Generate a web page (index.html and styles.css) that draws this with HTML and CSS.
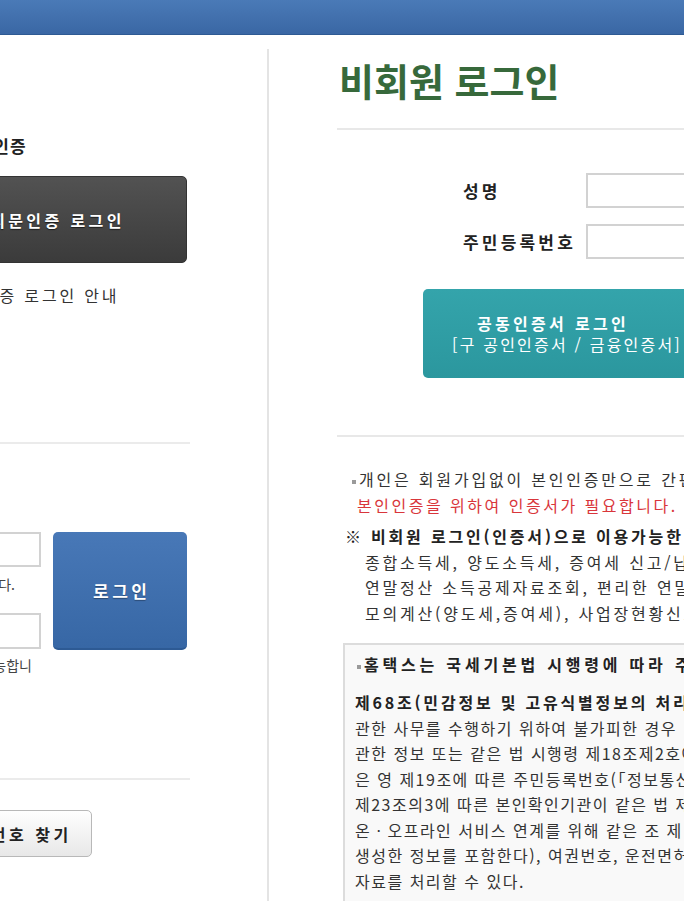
FILE: index.html
```html
<!DOCTYPE html>
<html lang="ko">
<head>
<meta charset="utf-8">
<title>비회원 로그인</title>
<link rel="stylesheet" href="styles.css">
</head>
<body>
<header class="topbar"></header>
<main class="page">
  <section class="member">
    <div class="member-inner">
      <h3 class="member-title">지문인증</h3>
      <button class="btn-dark" type="button">지문인증 로그인</button>
      <p class="guide">지문인증 로그인 안내</p>
      <hr class="rule rule-mid">
      <div class="id-login">
        <div class="id-fields">
          <input class="field" type="text">
          <p class="hint hint-id">영문, 숫자 조합으로 입력 가능합니다.</p>
          <input class="field field-pw" type="password">
          <p class="hint hint-pw">영문, 숫자, 특수문자 입력 가능합니</p>
        </div>
        <button class="btn-blue" type="button">로그인</button>
      </div>
      <hr class="rule rule-low">
      <button class="btn-find" type="button">비밀번호 찾기</button>
    </div>
  </section>

  <section class="guest">
    <h2 class="guest-title">비회원 로그인</h2>
    <hr class="guest-rule">
    <div class="guest-form">
      <label class="form-label">성명</label>
      <input class="form-input" type="text">
      <label class="form-label">주민등록번호</label>
      <input class="form-input" type="text">
    </div>
    <button class="btn-teal" type="button">
      <span class="teal-main">공동인증서 로그인</span>
      <span class="teal-sub">[구 공인인증서 / 금융인증서]</span>
    </button>
    <hr class="guest-rule guest-rule-low">

    <div class="notice">
      <div class="line note-line bullet-line"><span class="dot"></span>개인은 회원가입없이 본인인증만으로 간편하게 로그인</div>
      <div class="line note-line red-line">본인인증을 위하여 인증서가 필요합니다.</div>
      <div class="line mark-line">※ 비회원 로그인(인증서)으로 이용가능한 서비스</div>
      <div class="line note-line sub-line">종합소득세, 양도소득세, 증여세 신고/납부, 근로</div>
      <div class="line note-line sub-line">연말정산 소득공제자료조회, 편리한 연말정산</div>
      <div class="line note-line sub-line">모의계산(양도세,증여세), 사업장현황신고 등</div>
    </div>

    <div class="law-box">
      <div class="line box-head"><span class="dot"></span>홈택스는 국세기본법 시행령에 따라 주민등록번호</div>
      <div class="line box-article">제68조(민감정보 및 고유식별정보의 처리) ①</div>
      <div class="line">관한 사무를 수행하기 위하여 불가피한 경우 「개인</div>
      <div class="line">관한 정보 또는 같은 법 시행령 제18조제2호에</div>
      <div class="line">은 영 제19조에 따른 주민등록번호(「정보통신망</div>
      <div class="line">제23조의3에 따른 본인확인기관이 같은 법 제</div>
      <div class="line">온ㆍ오프라인 서비스 연계를 위해 같은 조 제</div>
      <div class="line">생성한 정보를 포함한다), 여권번호, 운전면허</div>
      <div class="line">자료를 처리할 수 있다.</div>
    </div>
  </section>
</main>
</body>
</html>
```

FILE: styles.css
```css
* { box-sizing: border-box; }

html, body {
  margin: 0;
  padding: 0;
}

body {
  width: 684px;
  height: 901px;
  overflow: hidden;
  background: #ffffff;
  font-family: "Noto Sans CJK KR", "Noto Sans", sans-serif;
  color: #333333;
}

.topbar {
  height: 35px;
  background: linear-gradient(#4a7ab7, #3a67a4);
  border-bottom: 1px solid #2e5a93;
}

.page {
  display: flex;
  align-items: flex-start;
}

/* ---------- left (member) column ---------- */
.member {
  width: 269px;
  flex: none;
  height: 880px;
  margin-top: 14px;
  overflow: hidden;
  border-right: 2px solid #e4e4e4;
}

.member-inner {
  width: 268px;
  margin-left: -78px;
}

.member-title {
  margin: 85px 0 0;
  padding-left: 38px;
  font-size: 17px;
  line-height: 24px;
  font-weight: 700;
  letter-spacing: 1px;
  color: #222;
  white-space: nowrap;
}

.btn-dark {
  display: block;
  width: 259px;
  height: 87px;
  margin: 18px 0 0 6px;
  border: 1px solid #333;
  border-radius: 5px;
  background: linear-gradient(#525252, #3b3b3b);
  color: #fff;
  font-family: inherit;
  font-size: 16px;
  font-weight: 700;
  letter-spacing: 3.4px;
  text-shadow: 0 1px 1px rgba(0,0,0,0.6);
}

.guide {
  margin: 20px 0 0;
  padding-left: 25px;
  font-size: 16px;
  line-height: 24px;
  letter-spacing: 2.8px;
  color: #333;
  white-space: nowrap;
}

.rule {
  height: 0;
  margin: 0;
  border: 0;
  border-top: 2px solid #ebebeb;
}

.rule-mid { margin-top: 135px; }
.rule-low { margin-top: 103px; }

.id-login {
  display: flex;
  align-items: flex-start;
  gap: 12px;
  margin-top: 88px;
}

.id-fields {
  width: 119px;
  flex: none;
}

.field {
  display: block;
  width: 119px;
  height: 35px;
  margin: 0;
  border: 2px solid #d2d2d2;
  background: #fff;
}

.field-pw {
  height: 36px;
  margin-top: 19px;
}

.hint {
  display: flex;
  justify-content: flex-end;
  margin: 7px 0 0;
  font-size: 14px;
  line-height: 20px;
  color: #444;
  white-space: nowrap;
}

.hint-id { padding-right: 26px; }
.hint-pw { padding-right: 9px; margin-top: 6px; }

.btn-blue {
  width: 134px;
  height: 118px;
  flex: none;
  border: 0;
  border-bottom: 2px solid #2d5a94;
  border-radius: 5px;
  background: linear-gradient(#4878b7, #3767a5);
  color: #fff;
  font-family: inherit;
  font-size: 17px;
  font-weight: 700;
  letter-spacing: 3.5px;
  text-indent: 3.5px;
  text-shadow: 0 1px 1px rgba(0,0,0,0.35);
}

.btn-find {
  display: block;
  width: 158px;
  height: 47px;
  margin: 30px 0 0 12px;
  border: 1px solid #b8b8b8;
  border-radius: 5px;
  background: linear-gradient(#fefefe, #e8e8e8);
  color: #222;
  font-family: inherit;
  font-size: 16px;
  font-weight: 700;
  letter-spacing: 3.5px;
}

/* ---------- right (guest) column ---------- */
.guest {
  width: 415px;
  flex: none;
  overflow: hidden;
  padding-left: 68px;
}

.guest-title {
  margin: 25px 0 0 2px;
  font-size: 38px;
  line-height: 40px;
  font-weight: 700;
  letter-spacing: 0;
  color: #37693b;
  white-space: nowrap;
}

.guest-rule {
  width: 420px;
  height: 0;
  margin: 28px 0 0;
  border: 0;
  border-top: 2px solid #e8e8e8;
}

.guest-rule-low { margin-top: 57px; }

.guest-form {
  display: grid;
  grid-template-columns: 123px 160px;
  row-gap: 16px;
  align-items: center;
  margin-top: 43px;
  padding-left: 126px;
}

.form-label {
  font-size: 17px;
  font-weight: 700;
  letter-spacing: 3.2px;
  color: #222;
  white-space: nowrap;
}

.form-input {
  display: block;
  width: 160px;
  height: 35px;
  margin: 0;
  border: 2px solid #d2d2d2;
  background: #fff;
}

.btn-teal {
  display: flex;
  flex-direction: column;
  align-items: center;
  justify-content: center;
  width: 276px;
  height: 89px;
  margin: 30px 0 0 86px;
  border: 0;
  border-radius: 5px;
  background: linear-gradient(#34a4ab, #2b979e);
  color: #fff;
  font-family: inherit;
  font-size: 16px;
  line-height: 21px;
  white-space: nowrap;
}

.teal-main {
  margin-right: 16px;
  font-weight: 700;
  letter-spacing: 3.3px;
}

.teal-sub {
  margin-left: 12px;
  letter-spacing: 2.2px;
}

.notice {
  margin-top: 30px;
}

.line {
  font-size: 16px;
  line-height: 25.5px;
  letter-spacing: 1.5px;
  white-space: nowrap;
  color: #333;
}

.note-line {
  letter-spacing: 2.8px;
}

.dot {
  display: inline-block;
  width: 4px;
  height: 4px;
  margin-right: 3px;
  vertical-align: middle;
  background: #9a9a9a;
}

.bullet-line { padding-left: 15px; }

.red-line {
  padding-left: 20px;
  letter-spacing: 2.5px;
  color: #d9363b;
}

.mark-line {
  margin-top: 6px;
  padding-left: 8px;
  font-weight: 700;
  letter-spacing: 2.8px;
  color: #222;
}

.sub-line { padding-left: 28px; }

.law-box {
  width: 420px;
  margin: 17px 0 0 6px;
  padding: 7px 0 40px 10px;
  border: 2px solid #dcdcdc;
  background: #f9f9f9;
}

.box-head {
  padding-left: 2px;
  font-weight: 700;
  letter-spacing: 3.8px;
  color: #222;
}

.box-article {
  margin-top: 12.5px;
  font-weight: 700;
  letter-spacing: 2.8px;
  color: #222;
}
```
